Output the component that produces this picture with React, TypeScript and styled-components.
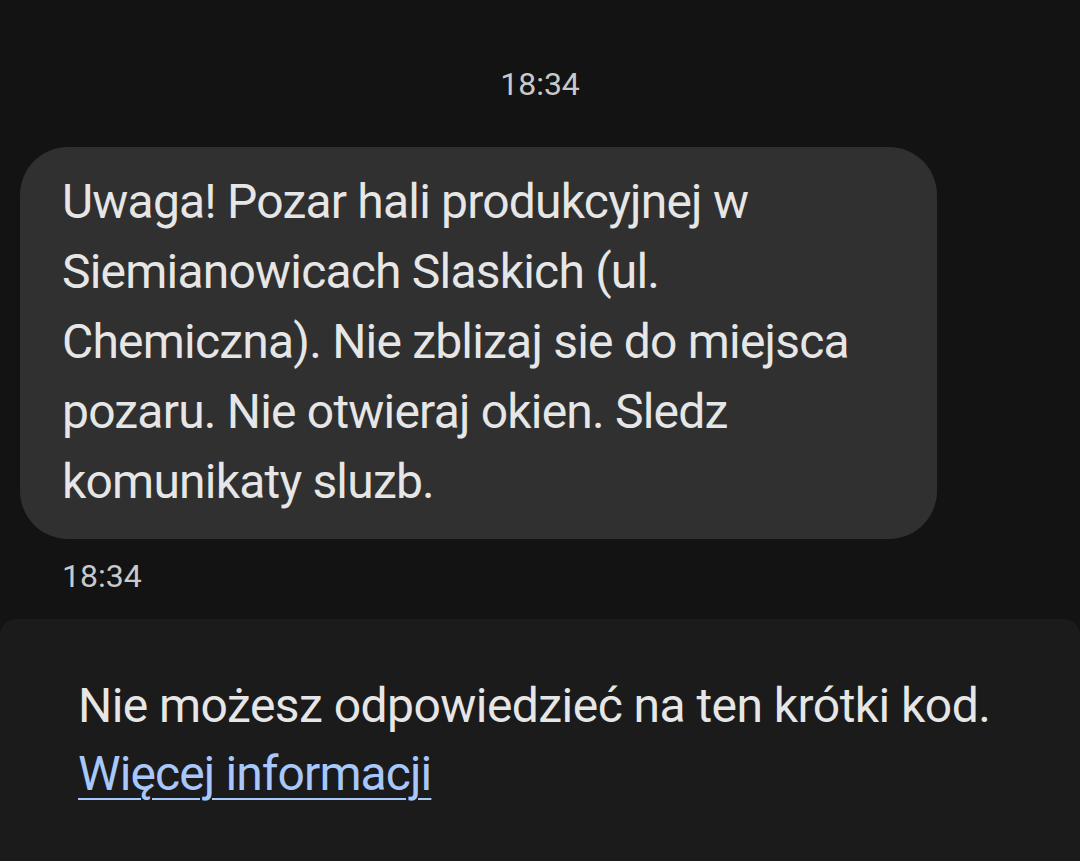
import React from "react";
import styled, { createGlobalStyle } from "styled-components";

const GlobalStyle = createGlobalStyle`
  html, body {
    margin: 0;
    padding: 0;
    background: #131313;
  }
  body {
    font-family: Roboto, "Noto Sans", sans-serif;
    -webkit-font-smoothing: antialiased;
  }
`;

const Screen = styled.div`
  width: 1080px;
  height: 861px;
  overflow: hidden;
  display: flex;
  flex-direction: column;
  background: #131313;
`;

const Thread = styled.div`
  display: flex;
  flex-direction: column;
  padding: 64px 0 0 0;
`;

const Stamp = styled.div<{ $center?: boolean }>`
  font-size: 32px;
  line-height: 40px;
  color: #c9c9c9;
  text-align: ${(p) => (p.$center ? "center" : "left")};
  padding-left: ${(p) => (p.$center ? "0" : "62px")};
`;

const Bubble = styled.div`
  margin: 43px 0 17px 20px;
  width: 917px;
  box-sizing: border-box;
  padding: 20px 30px 22px 42px;
  background: #303030;
  border-radius: 48px;
  color: #e6e6e6;
  font-size: 48px;
  letter-spacing: -0.8px;
  line-height: 70px;
`;

const Line = styled.div`
  white-space: nowrap;
`;

const Footer = styled.div`
  margin-top: 23px;
  flex: 1;
  background: #1b1b1b;
  border-radius: 16px 16px 0 0;
  padding: 53px 40px 0 78px;
  font-size: 48px;
  letter-spacing: -0.55px;
  line-height: 68px;
  color: #e6e6e6;
`;

const Link = styled.a`
  color: #a8c7fa;
  letter-spacing: -0.9px;
  text-decoration: underline;
  text-decoration-thickness: 2px;
  text-underline-offset: 8px;
`;

const lines = [
  "Uwaga! Pozar hali produkcyjnej w",
  "Siemianowicach Slaskich (ul.",
  "Chemiczna). Nie zblizaj sie do miejsca",
  "pozaru. Nie otwieraj okien. Sledz",
  "komunikaty sluzb.",
];

export default function App() {
  return (
    <>
      <GlobalStyle />
      <Screen>
        <Thread>
          <Stamp $center>18:34</Stamp>
          <Bubble>
            {lines.map((l) => (
              <Line key={l}>{l}</Line>
            ))}
          </Bubble>
          <Stamp>18:34</Stamp>
        </Thread>
        <Footer>
          <div>Nie możesz odpowiedzieć na ten krótki kod.</div>
          <Link href="#">Więcej informacji</Link>
        </Footer>
      </Screen>
    </>
  );
}
